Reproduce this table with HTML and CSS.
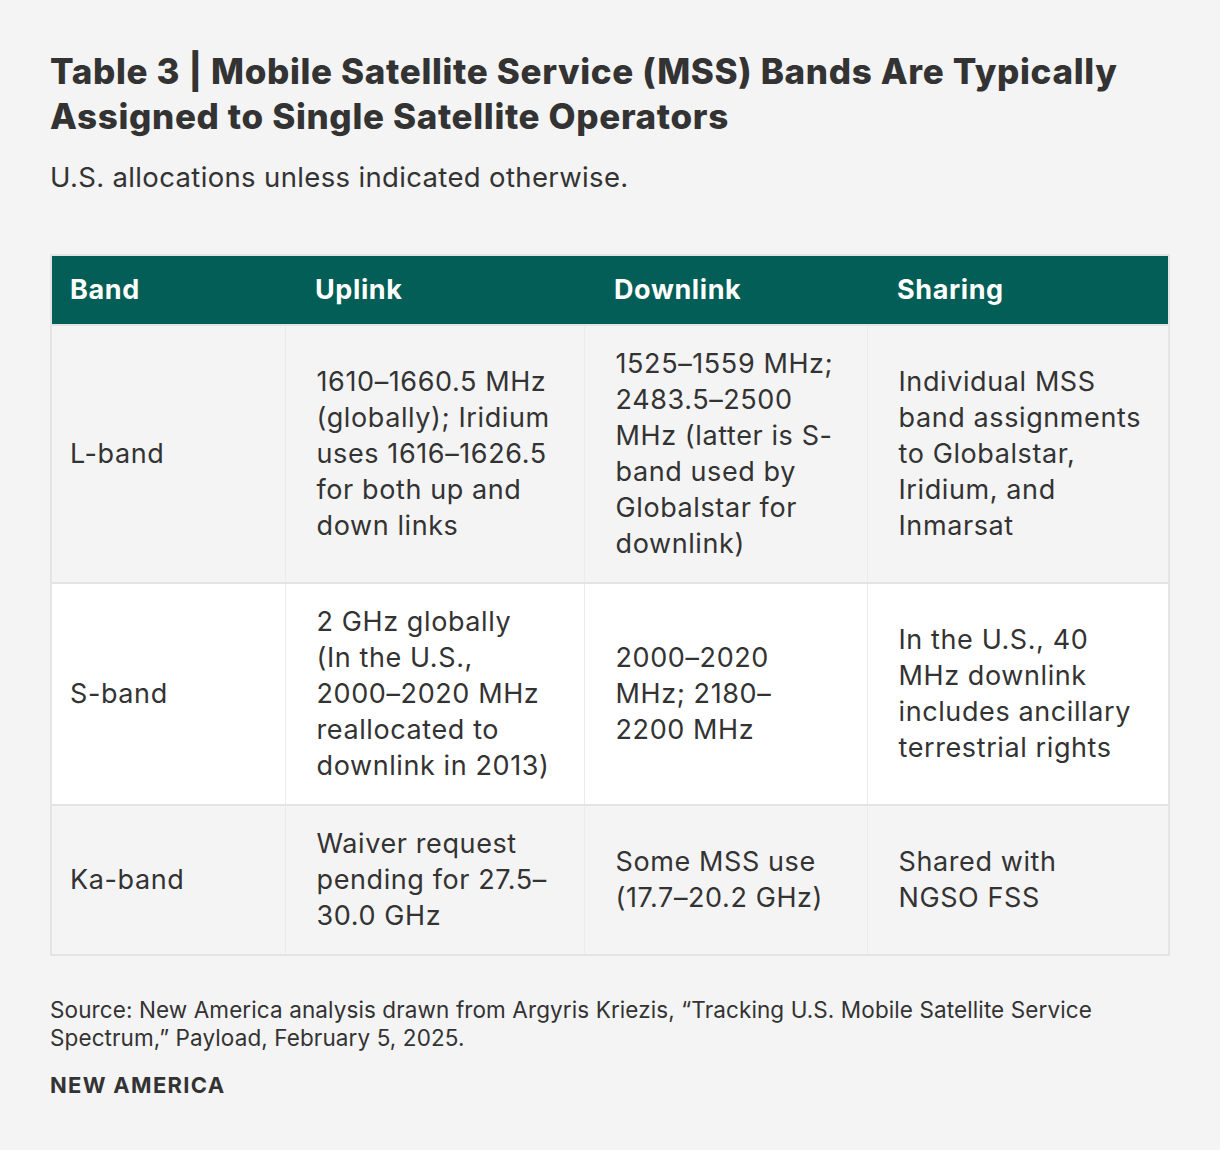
FILE: index.html
```html
<!DOCTYPE html>
<html lang="en">
<head>
<meta charset="utf-8">
<title>Table 3</title>
<link rel="stylesheet" href="styles.css">
</head>
<body>
<main class="page">
  <h1 class="title">Table 3 | Mobile Satellite Service (MSS) Bands Are Typically Assigned to Single Satellite Operators</h1>
  <p class="subtitle">U.S. allocations unless indicated otherwise.</p>

  <table class="data">
    <colgroup>
      <col class="c1"><col class="c2"><col class="c3"><col class="c4">
    </colgroup>
    <thead>
      <tr><th>Band</th><th>Uplink</th><th>Downlink</th><th>Sharing</th></tr>
    </thead>
    <tbody>
      <tr class="odd">
        <td>L-band</td>
        <td>1610–1660.5 MHz<br>(globally); Iridium<br>uses 1616–1626.5<br>for both up and<br>down links</td>
        <td>1525–1559 MHz;<br>2483.5–2500<br>MHz (latter is S-<br>band used by<br>Globalstar for<br>downlink)</td>
        <td>Individual MSS<br>band assignments<br>to Globalstar,<br>Iridium, and<br>Inmarsat</td>
      </tr>
      <tr class="even">
        <td>S-band</td>
        <td>2 GHz globally<br>(In the U.S.,<br>2000–2020 MHz<br>reallocated to<br>downlink in 2013)</td>
        <td>2000–2020<br>MHz; 2180–<br>2200 MHz</td>
        <td>In the U.S., 40<br>MHz downlink<br>includes ancillary<br>terrestrial rights</td>
      </tr>
      <tr class="odd">
        <td>Ka-band</td>
        <td>Waiver request<br>pending for 27.5–<br>30.0 GHz</td>
        <td>Some MSS use<br>(17.7–20.2 GHz)</td>
        <td>Shared with<br>NGSO FSS</td>
      </tr>
    </tbody>
  </table>

  <p class="source">Source: New America analysis drawn from Argyris Kriezis, “Tracking U.S. Mobile Satellite Service Spectrum,” Payload, February 5, 2025.</p>
  <p class="brand">NEW AMERICA</p>
</main>
</body>
</html>
```

FILE: styles.css
```css
html, body {
  margin: 0;
  padding: 0;
  background: #f4f4f4;
}

.page {
  font-family: Inter, "Open Sans", "Liberation Sans", sans-serif;
  color: #333333;
  padding: 49px 50px 40px 50px;
  width: 1120px;
}

.title {
  margin: 0;
  font-size: 35px;
  line-height: 45px;
  font-weight: 800;
  letter-spacing: 0.65px;
  color: #333333;
}

.subtitle {
  margin: 21px 0 0 0;
  font-size: 27.5px;
  line-height: 34px;
  font-weight: 400;
  letter-spacing: 0.35px;
}

.data {
  margin-top: 60px;
  width: 1120px;
  border-collapse: collapse;
  border: 2px solid #e4e4e4;
  font-size: 27px;
  line-height: 36px;
  letter-spacing: 0.6px;
}

.c1 { width: 234px; }
.c2 { width: 299px; }
.c3 { width: 283px; }
.c4 { width: 302px; }

.data th {
  background: #025e56;
  color: #ffffff;
  text-align: left;
  font-weight: 700;
  height: 68px;
  padding: 0 10px 0 30px;
  font-size: 27px;
  letter-spacing: 0.6px;
}

.data th:first-child,
.data td:first-child {
  padding-left: 18px;
}

.data td {
  padding: 20px 6px 20px 31px;
  vertical-align: middle;
  border-left: 1px solid #ebebeb;
  border-top: 2px solid #e4e4e4;
  white-space: nowrap;
}

.data td:first-child {
  border-left: none;
}

.odd td { background: #f4f4f4; }
.even td { background: #ffffff; }

.source {
  margin: 40px 0 0 0;
  font-size: 22.5px;
  line-height: 28px;
  letter-spacing: 0.1px;
}

.brand {
  margin: 19px 0 0 0;
  font-size: 22px;
  line-height: 28px;
  font-weight: 700;
  letter-spacing: 1.3px;
}
```
